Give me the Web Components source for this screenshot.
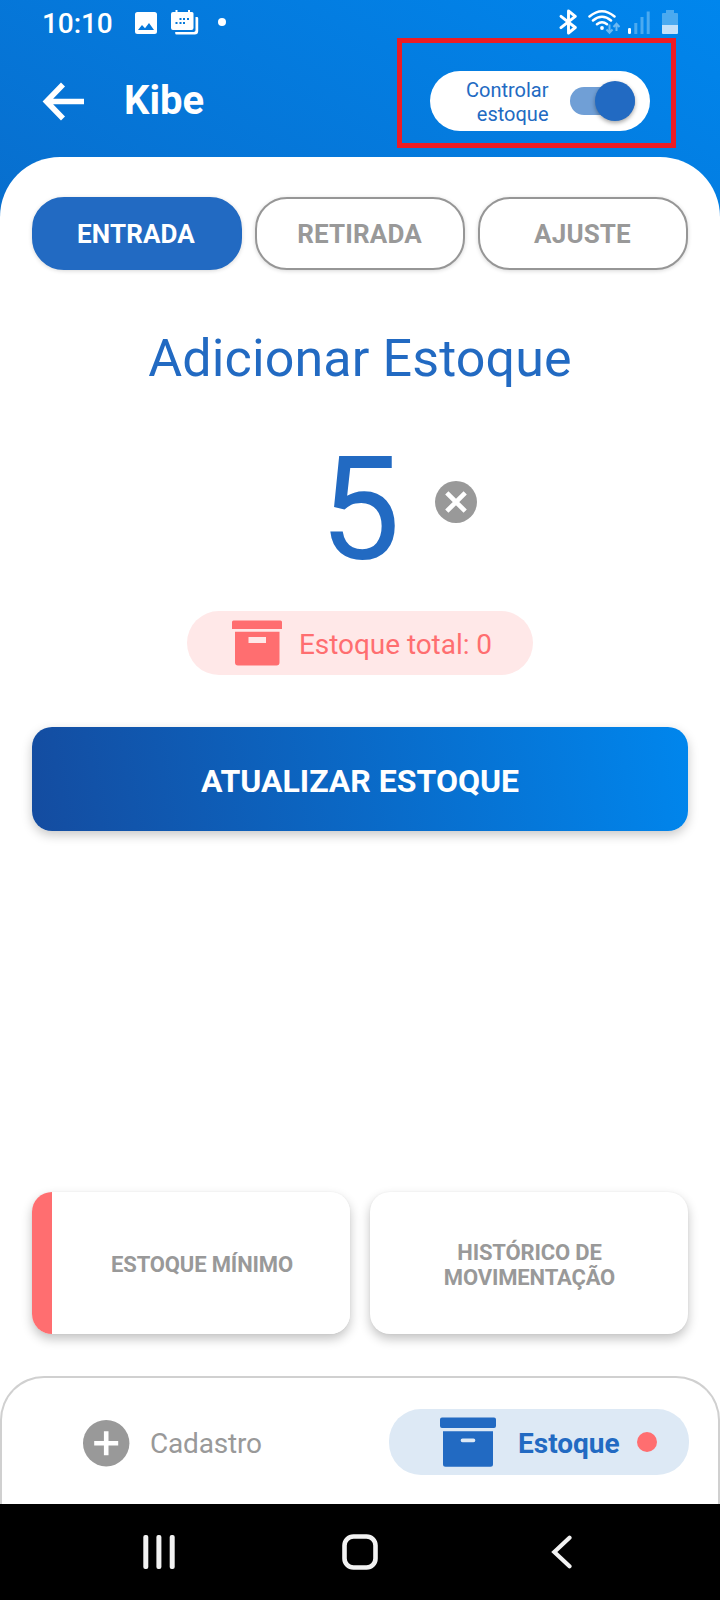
<!DOCTYPE html>
<html lang="pt-BR">
<head>
<meta charset="utf-8">
<title>Kibe</title>
<style>
html, body { margin: 0; padding: 0; }
body { width: 720px; height: 1600px; overflow: hidden; background: #fff; font-family: Roboto, "Liberation Sans", sans-serif; }
</style>
</head>
<body>
<stock-screen></stock-screen>
<script>
function define(name, html) {
  const template = document.createElement('template');
  template.innerHTML = html;
  customElements.define(name, class extends HTMLElement {
    constructor() {
      super();
      this.attachShadow({ mode: 'open' }).append(template.content.cloneNode(true));
    }
  });
}

define('status-bar', `
<style>
:host { display: flex; height: 44px; box-sizing: border-box; padding: 0 42px; align-items: flex-start; color: #fff; }
.time { font-size: 28px; line-height: 33px; font-weight: 500; letter-spacing: -.1px; margin-top: 7px; width: 71px; white-space: nowrap; }
svg { display: block; flex: none; }
.image { margin: 12px 0 0 22px; }
.cal { margin: 10px 0 0 14px; }
.dot { width: 8px; height: 8px; border-radius: 50%; background: #fff; margin: 18px auto 0 19px; }
.bt { margin: 9px 9px 0 0; }
.wifi { margin: 9px 8px 0 0; }
.sig { margin: 11px 12px 0 0; }
.bat { margin-top: 10px; }
</style>
<span class="time">10:10</span>
<svg class="image" width="22" height="22" viewBox="0 0 22 22"><path fill="#fff" fill-rule="evenodd" d="M2.5 0h17A2.5 2.5 0 0 1 22 2.5v17a2.5 2.5 0 0 1-2.500 2.500h-17A2.500 2.500 0 0 1 0 19.500v-17A2.500 2.500 0 0 1 2.500 0zM3 18h16l-5-7-4 5.200-3-3.200z"/></svg>
<svg class="cal" width="28" height="25" viewBox="0 0 28 25"><path fill="#fff" d="M2 2h2.500V0h2v2H17V0h2v2h2A1.500 1.500 0 0 1 22.500 3.500V18a2 2 0 0 1-2 2H2a2 2 0 0 1-2-2V4a2 2 0 0 1 2-2zM24.500 7H26a1.300 1.300 0 0 1 1.200 1.300V21a3.500 3.500 0 0 1-3.500 3.500H5.500a1.300 1.300 0 0 1-1.300-1.300V22H23a1.800 1.800 0 0 0 1.500-2z"/><path fill="#0679da" d="M8.500 8h2v2h-2zM12 8h2v2h-2zM16 8h2v2h-2zM4.500 12h2v2h-2zM8.500 12h2v2h-2zM12 12h2v2h-2z"/></svg>
<i class="dot"></i>
<svg class="bt" width="20" height="26" viewBox="0 0 20 26"><path fill="none" stroke="#fff" stroke-width="2.900" stroke-linejoin="round" stroke-linecap="round" d="M2 7.300 16.300 18.500 9.500 24V2l6.800 5.300L2 18.700"/></svg>
<svg class="wifi" width="32" height="26" viewBox="0 0 32 26"><g fill="none" stroke="#fff" stroke-width="2.500" stroke-linecap="round"><path d="M1.500 7.500Q14-3 26.500 7.500M5 11.500q9-7.600 18 0M9 15.300q5-4 10 0"/></g><circle cx="14" cy="19" r="1.900" fill="#fff"/><path fill="none" stroke="#6db9f2" stroke-width="2" d="M21.500 15.500v8M18.500 20.500l3 3.200 3-3.200M28.500 22v-7M25.500 18l3-3.200 3 3.200"/></svg>
<svg class="sig" width="22" height="23" viewBox="0 0 22 23"><rect y="17" width="3" height="6" rx="1.300" fill="#fff"/><path fill="#4baaf0" d="M6.300 12h3v11h-3zM12.500 6h3v17h-3zM18.700.5h3V23h-3z"/></svg>
<svg class="bat" width="16" height="24" viewBox="0 0 16 24"><path fill="#4baaf0" d="M4 0h8v3h3a1 1 0 0 1 1 1v11H0V4a1 1 0 0 1 1-1h3z"/><path fill="#c4e1f9" d="M0 15h16v8a1 1 0 0 1-1 1H1a1 1 0 0 1-1-1z"/></svg>
`);

define('stock-switch', `
<style>
:host { display: flex; align-items: center; width: 220px; height: 60px; box-sizing: border-box; padding: 0 15px 0 28px; border-radius: 30px; background: #fff; }
.label { width: 90.500px; font-size: 20px; line-height: 24px; text-align: right; color: #226ac2; padding-top: 2px; }
.track { margin-left: 21.500px; width: 65px; height: 28px; border-radius: 14px; background: #709fd6; display: flex; align-items: center; justify-content: flex-end; }
.thumb { width: 40px; height: 40px; flex: none; border-radius: 50%; background: #226ac2; box-shadow: 0 2px 4px rgba(0,0,0,.35); }
</style>
<span class="label"><slot></slot></span><span class="track"><i class="thumb"></i></span>
`);

define('app-bar', `
<style>
:host { display: flex; height: 113px; align-items: flex-start; box-sizing: border-box; padding-left: 42px; color: #fff; }
.back { display: block; margin-top: 37px; flex: none; }
h1 { margin: 33px 0 0 39px; font-size: 40px; line-height: 47px; font-weight: 700; width: 273px; }
.mark { margin-top: -6px; box-sizing: border-box; width: 279px; height: 110px; border: 5px solid #ed1c24; padding: 28px 0 0 28px; }
</style>
<svg class="back" width="43" height="40" viewBox="0 0 43 40"><path fill="none" stroke="#fff" stroke-width="5.600" d="M42 20.500H5M21 3.500 4.500 20.500 21 37.500"/></svg>
<h1><slot></slot></h1>
<div class="mark"><stock-switch>Controlar<br>estoque</stock-switch></div>
`);

define('tab-button', `
<style>
:host { display: flex; align-items: center; justify-content: center; width: 210px; height: 73px; box-sizing: border-box; border: 2px solid #969696; border-radius: 32px; background: #fff; color: #999; font-size: 26px; line-height: 30px; font-weight: 700; letter-spacing: .15px; padding-right: 1px; box-shadow: 0 1px 4px rgba(0,0,0,.16); }
:host([active]) { background: #226ac2; border-color: #226ac2; color: #fff; padding-right: 2px; }
</style><slot></slot>
`);

define('box-icon', `
<style>:host { display: block; flex: none; } svg { display: block; width: 100%; height: 100%; }</style>
<svg viewBox="0 0 56 50" preserveAspectRatio="none"><path fill="currentColor" fill-rule="evenodd" d="M2 .5h52a2 2 0 0 1 2 2v6.500a2 2 0 0 1-2 2H2a2 2 0 0 1-2-2V2.500a2 2 0 0 1 2-2zM3 14.300h50v33a2.500 2.500 0 0 1-2.500 2.500h-45A2.500 2.500 0 0 1 3 47.300zM22.500 21.500a1.500 1.500 0 0 0 0 3.700h11a1.500 1.500 0 0 0 0-3.700z"/></svg>
`);

define('stock-entry', `
<style>
:host { display: flex; flex-direction: column; align-items: center; }
h2 { margin: 58px 0 0; font-size: 52px; line-height: 61px; font-weight: 400; letter-spacing: .13px; color: #226ac2; white-space: nowrap; }
.row { margin-top: 36px; height: 169px; display: grid; grid-template-columns: 1fr auto 1fr; width: 656px; }
.num { grid-column: 2; font-size: 144px; line-height: 170px; color: #226ac2; }
.clear { margin: 56px 0 0 35px; display: block; }
.total { margin-top: 17px; width: 346px; height: 64px; border-radius: 32px; background: #ffe8e8; color: #ff6e70; display: flex; align-items: center; box-sizing: border-box; padding-left: 45px; font-size: 28px; line-height: 33px; white-space: nowrap; }
.total svg { display: block; }
.total span { margin-left: 17px; padding-top: 2px; color: #ff6e70; letter-spacing: -.06px; }
.update { margin-top: 52px; width: 656px; height: 104px; border-radius: 20px; background: linear-gradient(81deg, #144ca0, #0086ed); color: #fff; display: flex; align-items: center; justify-content: center; font-size: 32px; line-height: 38px; font-weight: 700; padding-top: 4px; box-sizing: border-box; box-shadow: 0 4px 11px rgba(0,0,0,.22); }
</style>
<h2>Adicionar Estoque</h2>
<div class="row"><span class="num">5</span>
<svg class="clear" width="42" height="42" viewBox="0 0 42 42"><circle cx="21" cy="21" r="21" fill="#999"/><path stroke="#fff" stroke-width="4.600" d="M11.800 11.800l18.400 18.400M30.200 11.800 11.800 30.200"/></svg></div>
<div class="total"><svg width="50" height="46" viewBox="0 0 50 46"><path fill="#ff6e70" fill-rule="evenodd" d="M1.500 .5h47A1.500 1.500 0 0 1 50 2v7H0V2A1.500 1.500 0 0 1 1.500 .5zM3 11.700h44.500V42.500a3 3 0 0 1-3 3H6a3 3 0 0 1-3-3zM16.500 17v6H34v-6z"/></svg><span>Estoque total: 0</span></div>
<div class="update">ATUALIZAR ESTOQUE</div>
`);

define('action-card', `
<style>
:host { display: flex; align-items: center; justify-content: center; text-align: center; width: 318px; height: 142px; box-sizing: border-box; border-radius: 20px; background: #fff; color: #999; font-size: 22px; line-height: 25px; font-weight: 700; letter-spacing: -.15px; padding: 4px 0 0 1px; box-shadow: 0 5px 11px rgba(0,0,0,.24), 0 0 2px rgba(0,0,0,.05); }
:host([alert]) { background: linear-gradient(90deg, #ff6e70 20px, #fff 20px); padding: 2px 0 0 22px; }
</style><span><slot></slot></span>
`);

define('bottom-tabs', `
<style>
:host { display: flex; align-items: flex-start; height: 128px; box-sizing: border-box; border: 2px solid #d0d0d0; border-bottom: 0; border-radius: 44px 44px 0 0; background: #fff; font-size: 28px; line-height: 33px; padding: 31px 0 0 80.500px; }
.item { display: flex; align-items: center; height: 66px; color: #999; width: 306.500px; }
.item svg { display: block; margin-top: 2px; }
.item span { margin-left: 20.500px; padding-top: 3px; letter-spacing: -.2px; }
.active { display: flex; align-items: center; width: 300px; height: 66px; box-sizing: border-box; padding-left: 51px; border-radius: 32px; background: #dde9f5; color: #226ac2; font-weight: 700; }
box-icon { width: 56px; height: 50px; }
.active span { margin-left: 22px; padding-top: 3px; width: 101px; }
.active i { width: 20px; height: 20px; border-radius: 50%; background: #ff6e70; margin-left: 18px; }
</style>
<div class="item"><svg width="47" height="47" viewBox="0 0 47 47"><circle cx="23.200" cy="23.200" r="23.200" fill="#999"/><path stroke="#fff" stroke-width="4.600" d="M23.200 11.200v24M11.200 23.200h24"/></svg><span>Cadastro</span></div>
<div class="active"><box-icon></box-icon><span>Estoque</span><i></i></div>
`);

define('system-nav', `
<style>
:host { display: flex; align-items: center; height: 96px; background: #000; box-sizing: border-box; padding: 0 143px; justify-content: space-between; }
svg { display: block; }
.home { margin-left: -4px; }
</style>
<svg width="32" height="34" viewBox="0 0 32 34"><g fill="#f2f2f2"><rect x=".3" width="5" height="34" rx="2"/><rect x="13.400" width="5" height="34" rx="2"/><rect x="26.700" width="5" height="34" rx="2"/></g></svg>
<svg class="home" width="36" height="36" viewBox="0 0 36 36"><rect x="2.500" y="2.500" width="31" height="31" rx="9" fill="none" stroke="#f2f2f2" stroke-width="4.600"/></svg>
<svg width="28" height="34" viewBox="0 0 28 34"><path fill="none" stroke="#f2f2f2" stroke-width="4.200" stroke-linecap="round" d="M20.500 2.800 5.300 17 20.500 31.200" stroke-linejoin="miter"/></svg>
`);

define('stock-screen', `
<style>
:host { display: flex; flex-direction: column; width: 720px; height: 1600px; background: linear-gradient(29deg, #144ca0, #0086ed) 0 0 / 720px 1100px no-repeat; }
main { flex: 1; display: flex; flex-direction: column; border-radius: 60px 60px 0 0; background: #fff; }
.tabs { display: flex; gap: 13px; padding: 40px 32px 0; }
.cards { display: flex; gap: 20px; padding: 0 32px; margin: auto 0 42px; }
</style>
<status-bar></status-bar>
<app-bar>Kibe</app-bar>
<main>
<div class="tabs"><tab-button active>ENTRADA</tab-button><tab-button>RETIRADA</tab-button><tab-button>AJUSTE</tab-button></div>
<stock-entry></stock-entry>
<div class="cards"><action-card alert>ESTOQUE MÍNIMO</action-card><action-card>HISTÓRICO DE<br>MOVIMENTAÇÃO</action-card></div>
<bottom-tabs></bottom-tabs>
</main>
<system-nav></system-nav>
`);
</script>
</body>
</html>
